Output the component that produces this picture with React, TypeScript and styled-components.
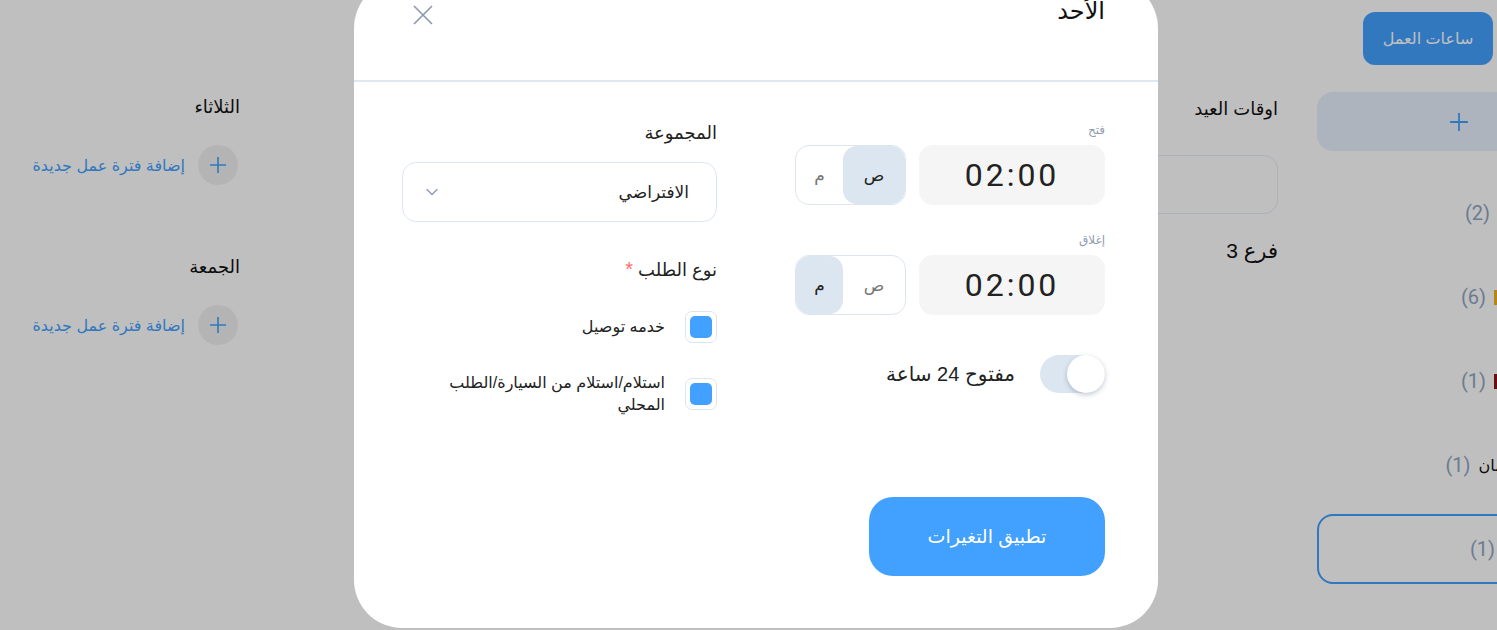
import React from "react";
import styled, { createGlobalStyle } from "styled-components";
import { ChevronDown } from "lucide-react";

const GlobalStyle = createGlobalStyle`
  html, body {
    margin: 0;
    padding: 0;
    background: #ffffff;
    overflow: hidden;
  }
  body {
    font-family: "Liberation Sans", "DejaVu Sans", sans-serif;
    color: #222222;
  }
  * {
    box-sizing: border-box;
  }
`;

const blue = "#42a0ff";
const line = "#dde6f0";
const muted = "#8d9bb0";

// Page behind the dialog
const Page = styled.div`
  display: flex;
  width: 1600px;
  height: 630px;
`;

const Main = styled.main`
  flex: 1;
  direction: rtl;
  display: flex;
  justify-content: space-between;
  padding: 97px 39px 0 33px;
`;

const HolidayColumn = styled.section`
  width: 420px;
  display: flex;
  flex-direction: column;
`;

const SectionTitle = styled.h3<{ $size?: number }>`
  margin: 0;
  font-size: ${(p) => p.$size ?? 18}px;
  line-height: 24px;
  font-weight: 400;
  color: #111;
`;

const HolidayInput = styled.div`
  height: 59px;
  margin: 34px 0 25px;
  border: 1px solid #e4edf7;
  border-radius: 14px;
  background: #fff;
`;

const DaysColumn = styled.section`
  width: 207px;
  display: flex;
  flex-direction: column;
  gap: 70px;
  margin-top: -2px;
`;

const DayBlock = styled.div`
  display: flex;
  flex-direction: column;
  gap: 26px;
`;

const AddRow = styled.button`
  display: flex;
  align-items: center;
  gap: 13px;
  padding: 0 2px 0 0;
  border: 0;
  background: none;
  font-family: inherit;
  font-size: 16px;
  white-space: nowrap;
  color: ${blue};
  cursor: pointer;
`;

const AddCircle = styled.span`
  flex: 0 0 40px;
  height: 40px;
  border-radius: 50%;
  background: #f1f1f1;
  display: grid;
  place-items: center;
`;

const Sidebar = styled.aside`
  width: 283px;
  direction: rtl;
  display: flex;
  flex-direction: column;
  padding-top: 12px;
`;

const HoursButton = styled.button`
  align-self: flex-start;
  margin-right: 107px;
  width: 130px;
  height: 53px;
  border: 0;
  border-radius: 12px;
  background: ${blue};
  color: #fff;
  font-family: inherit;
  font-size: 16px;
`;

const AddBranch = styled.div`
  margin-top: 27px;
  height: 59px;
  border-radius: 16px;
  background: #e7f0fc;
  display: grid;
  place-items: center;
  margin-bottom: 20px;
`;

const BranchRow = styled.div<{ $inset: number; $boxed?: boolean }>`
  display: flex;
  align-items: center;
  gap: 8px;
  height: ${(p) => (p.$boxed ? "70px" : "84px")};
  padding-right: ${(p) => p.$inset}px;
  ${(p) =>
    p.$boxed &&
    `
    margin-top: 7px;
    border: 2px solid ${blue};
    border-radius: 16px;
  `}
`;

const BranchName = styled.span`
  font-size: 16px;
  color: #111;
`;

const Marker = styled.span<{ $color: string }>`
  width: 8px;
  height: 15px;
  background: ${(p) => p.$color};
`;

const Count = styled.span`
  font-family: Roboto, sans-serif;
  font-size: 20px;
  color: #8fa5c2;
`;

// Overlay and dialog
const Overlay = styled.div`
  position: fixed;
  inset: 0;
  background: rgba(0, 0, 0, 0.25);
  display: flex;
  justify-content: center;
  align-items: flex-start;
`;

const Modal = styled.div`
  direction: rtl;
  width: 804px;
  margin: -20px 0 0 15px;
  background: #fff;
  border-radius: 48px;
  padding-bottom: 52px;
`;

const Header = styled.header`
  display: flex;
  justify-content: space-between;
  align-items: flex-start;
  padding: 16px 53px 55px 59px;
  border-bottom: 2px solid #dfe8f2;
`;

const Title = styled.h2`
  margin: 0;
  font-size: 24px;
  line-height: 29px;
  font-weight: 400;
  color: #111;
`;

const CloseButton = styled.button`
  margin-top: 9px;
  padding: 0;
  border: 0;
  background: none;
  line-height: 0;
  cursor: pointer;
`;

const Body = styled.div`
  display: grid;
  grid-template-columns: 310px 315px;
  column-gap: 78px;
  padding: 40px 53px 0 48px;
`;

const Column = styled.div`
  display: flex;
  flex-direction: column;
`;

const SmallLabel = styled.div<{ $top?: number }>`
  font-size: 12px;
  line-height: 16px;
  color: ${muted};
  margin: ${(p) => p.$top ?? 0}px 0 7px;
`;

const TimeRow = styled.div`
  display: flex;
  gap: 13px;
`;

const TimeBox = styled.div`
  width: 186px;
  height: 60px;
  border-radius: 14px;
  background: #f5f5f5;
  display: grid;
  place-items: center;
  direction: ltr;
  font-family: Roboto, sans-serif;
  font-size: 32px;
  letter-spacing: 3px;
  color: #222;
`;

const Meridiem = styled.div`
  display: flex;
  width: 111px;
  height: 60px;
  border: 1px solid ${line};
  border-radius: 14px;
`;

const MeridiemOption = styled.span<{ $active?: boolean; $w: number }>`
  width: ${(p) => p.$w}px;
  display: grid;
  place-items: center;
  border-radius: 14px;
  font-size: 17px;
  background: ${(p) => (p.$active ? "#dce6f1" : "transparent")};
  color: ${(p) => (p.$active ? "#222" : "#777")};
`;

const SwitchRow = styled.label`
  display: flex;
  align-items: center;
  gap: 25px;
  margin-top: 40px;
  font-size: 20px;
  color: #222;
`;

const SwitchTrack = styled.span`
  width: 65px;
  height: 38px;
  border-radius: 19px;
  background: #dce6f1;
  display: flex;
  align-items: center;
`;

const SwitchKnob = styled.span`
  width: 38px;
  height: 38px;
  border-radius: 50%;
  background: #fff;
  box-shadow: 0 2px 5px rgba(60, 80, 110, 0.3);
`;

const ApplyButton = styled.button`
  align-self: flex-start;
  margin-top: 104px;
  width: 236px;
  height: 79px;
  border: 0;
  border-radius: 24px;
  background: ${blue};
  color: #fff;
  font-family: inherit;
  font-size: 19px;
  cursor: pointer;
`;

const FieldLabel = styled.div<{ $top?: number; $bottom: number }>`
  font-size: 18px;
  line-height: 22px;
  color: #222;
  margin: ${(p) => p.$top ?? 0}px 0 ${(p) => p.$bottom}px;
`;

const Required = styled.span`
  font-size: 20px;
  color: #ff6b6b;
`;

const Select = styled.div`
  height: 60px;
  border: 1px solid ${line};
  border-radius: 14px;
  display: flex;
  align-items: center;
  justify-content: space-between;
  padding: 0 27px 0 19px;
  font-size: 17px;
  color: #222;
`;

const CheckList = styled.div`
  display: flex;
  flex-direction: column;
  gap: 29px;
`;

const CheckRow = styled.label`
  display: flex;
  align-items: center;
  gap: 20px;
  font-size: 16px;
  line-height: 22px;
  color: #222;
`;

const CheckBox = styled.span`
  flex: 0 0 32px;
  height: 32px;
  border: 1px solid ${line};
  border-radius: 7px;
  padding: 4px;
  &::after {
    content: "";
    display: block;
    width: 22px;
    height: 22px;
    border-radius: 5px;
    background: ${blue};
  }
`;

const CheckText = styled.span`
  max-width: 222px;
`;

const Plus = ({ size = 18 }: { size?: number }) => (
  <svg width={size} height={size} viewBox="0 0 18 18">
    <path d="M9 1v16M1 9h16" stroke={blue} strokeWidth="1.6" fill="none" />
  </svg>
);

const CloseIcon = () => (
  <svg width="20" height="20" viewBox="0 0 20 20">
    <path d="M1 1l18 18M19 1L1 19" stroke={muted} strokeWidth="1.7" fill="none" />
  </svg>
);

const days = ["الثلاثاء", "الجمعة"];

const branches = [
  { count: "(2)", inset: 110 },
  { count: "(6)", inset: 98, marker: "#f2b21c" },
  { count: "(1)", inset: 98, marker: "#8e1414" },
  { count: "(1)", inset: 86, name: "عمان" },
];

export default function App() {
  return (
    <>
      <GlobalStyle />
      <Page>
        <Main>
          <HolidayColumn>
            <SectionTitle>اوقات العيد</SectionTitle>
            <HolidayInput />
            <SectionTitle $size={21}>فرع 3</SectionTitle>
          </HolidayColumn>
          <DaysColumn>
            {days.map((d) => (
              <DayBlock key={d}>
                <SectionTitle>{d}</SectionTitle>
                <AddRow>
                  <AddCircle>
                    <Plus />
                  </AddCircle>
                  إضافة فترة عمل جديدة
                </AddRow>
              </DayBlock>
            ))}
          </DaysColumn>
        </Main>
        <Sidebar>
          <HoursButton>ساعات العمل</HoursButton>
          <AddBranch>
            <Plus size={20} />
          </AddBranch>
          {branches.map((b, i) => (
            <BranchRow key={i} $inset={b.inset}>
              {b.marker && <Marker $color={b.marker} />}
              {b.name && <BranchName>{b.name}</BranchName>}
              <Count>{b.count}</Count>
            </BranchRow>
          ))}
          <BranchRow $inset={103} $boxed>
            <Count>(1)</Count>
          </BranchRow>
        </Sidebar>
      </Page>

      <Overlay>
        <Modal>
          <Header>
            <Title>الأحد</Title>
            <CloseButton aria-label="إغلاق">
              <CloseIcon />
            </CloseButton>
          </Header>
          <Body>
            <Column>
              <SmallLabel>فتح</SmallLabel>
              <TimeRow>
                <TimeBox>02:00</TimeBox>
                <Meridiem>
                  <MeridiemOption $w={62} $active>
                    ص
                  </MeridiemOption>
                  <MeridiemOption $w={47}>م</MeridiemOption>
                </Meridiem>
              </TimeRow>
              <SmallLabel $top={27}>إغلاق</SmallLabel>
              <TimeRow>
                <TimeBox>02:00</TimeBox>
                <Meridiem>
                  <MeridiemOption $w={62}>ص</MeridiemOption>
                  <MeridiemOption $w={47} $active>
                    م
                  </MeridiemOption>
                </Meridiem>
              </TimeRow>
              <SwitchRow>
                <SwitchTrack>
                  <SwitchKnob />
                </SwitchTrack>
                مفتوح 24 ساعة
              </SwitchRow>
              <ApplyButton>تطبيق التغيرات</ApplyButton>
            </Column>

            <Column>
              <FieldLabel $bottom={18}>المجموعة</FieldLabel>
              <Select>
                الافتراضي
                <ChevronDown size={20} strokeWidth={1.5} color={muted} />
              </Select>
              <FieldLabel $top={36} $bottom={30}>
                نوع الطلب <Required>*</Required>
              </FieldLabel>
              <CheckList>
                <CheckRow>
                  <CheckBox />
                  <CheckText>خدمه توصيل</CheckText>
                </CheckRow>
                <CheckRow>
                  <CheckBox />
                  <CheckText>استلام/استلام من السيارة/الطلب المحلي</CheckText>
                </CheckRow>
              </CheckList>
            </Column>
          </Body>
        </Modal>
      </Overlay>
    </>
  );
}
